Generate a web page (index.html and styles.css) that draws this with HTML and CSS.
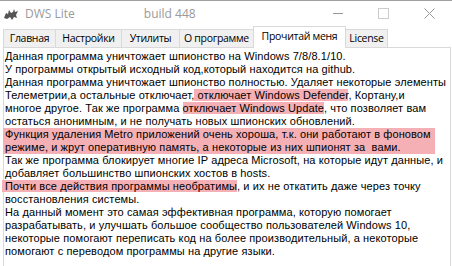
FILE: index.html
```html
<!DOCTYPE html>
<html lang="ru">
<head>
  <meta charset="UTF-8">
  <title>DWS Lite</title>
  <link rel="stylesheet" href="styles.css">
</head>
<body>
  <div class="window">
    <div class="titlebar">
      <svg class="app-icon" width="14" height="11" viewBox="0 0 14 11">
        <path d="M0 9 L2 4 L4 5 L5 1 L7 4 L9 3 L10 0 L11 3 L14 2 L12 6 L13 9 L10 8 L8 11 L6 8 L3 10 Z" fill="#555"/>
      </svg>
      <span class="title">DWS Lite</span>
      <span class="build">build 448</span>
      <div class="controls">
        <span class="ctl min"></span>
        <span class="ctl max"></span>
        <svg class="ctl close" width="11" height="11" viewBox="0 0 11 11">
          <path d="M0.5 0.5 L10.5 10.5 M10.5 0.5 L0.5 10.5" stroke="#999" stroke-width="1"/>
        </svg>
      </div>
    </div>

    <div class="tabs">
      <div class="tab tab-main">Главная</div>
      <div class="tab tab-settings">Настройки</div>
      <div class="tab tab-utils">Утилиты</div>
      <div class="tab tab-about">О программе</div>
      <div class="tab tab-readme active">Прочитай меня</div>
      <div class="tab tab-license">License</div>
    </div>

    <div class="panel">
      <div class="readme">
        <div class="line">Данная программа уничтожает шпионство на Windows 7/8/8.1/10.</div>
        <div class="line">У программы открытый исходный код,который находится на github.</div>
        <div class="line">Данная программа уничтожает шпионство полностью. Удаляет некоторые элементы</div>
        <div class="line">Телеметрии,а остальные отключает,<span class="mark"> отключает Windows Defender</span>, Кортану,и</div>
        <div class="line">многое другое. Так же программа <span class="mark">отключает Windows Update</span>, что позволяет вам</div>
        <div class="line">остаться анонимным, и не получать новых шпионских обновлений.</div>
        <div class="block-mark">
          <div class="line">Функция удаления Metro приложений очень хороша, т.к. они работают в фоновом</div>
          <div class="line">режиме, и жрут оперативную память, а некоторые из них шпионят за&nbsp; вами.</div>
        </div>
        <div class="line">Так же программа блокирует многие IP адреса Microsoft, на которые идут данные, и</div>
        <div class="line">добавляет большинство шпионских хостов в hosts.</div>
        <div class="line"><span class="mark first">Почти все действия программы необратимы</span>, и их не откатить даже через точку</div>
        <div class="line">восстановления системы.</div>
        <div class="line">На данный момент это самая эффективная программа, которую помогает</div>
        <div class="line">разрабатывать, и улучшать большое сообщество пользователей Windows 10,</div>
        <div class="line">некоторые помогают переписать код на более производительный, а некоторые</div>
        <div class="line">помогают с переводом программы на другие языки.</div>
      </div>
    </div>
  </div>
</body>
</html>
```

FILE: styles.css
```css
body {
  margin: 0;
  background: #fff;
  overflow: hidden;
}
.window {
  width: 452px;
  height: 266px;
  border-top: 1px solid #a0a0a0;
  box-sizing: border-box;
  background: #fff;
  font-family: "Liberation Sans", Arial, sans-serif;
  overflow: hidden;
}
.titlebar {
  height: 25px;
  display: flex;
  align-items: center;
}
.app-icon {
  margin-left: 4px;
  margin-top: 1px;
}
.title {
  margin-left: 7px;
  font-family: "Open Sans", "Noto Sans", sans-serif;
  font-size: 12px;
  color: #9a9a9a;
}
.build {
  margin-left: 69px;
  font-family: "Open Sans", "Noto Sans", sans-serif;
  font-size: 12px;
  color: #9a9a9a;
}
.controls {
  margin-left: auto;
  display: flex;
  align-items: center;
  margin-right: 17px;
}
.ctl {
  display: block;
}
.min {
  width: 10px;
  border-top: 1px solid #999;
  margin-right: 35px;
}
.max {
  width: 9px;
  height: 9px;
  border: 1px solid #ccc;
  margin-right: 35px;
}
.tabs {
  display: flex;
  align-items: flex-end;
  height: 21px;
  padding-left: 3px;
  font-family: "Open Sans", "Noto Sans", sans-serif;
  font-size: 10.5px;
  letter-spacing: -0.3px;
  color: #000;
}
.tab {
  box-sizing: border-box;
  height: 18px;
  line-height: 16px;
  text-align: center;
  white-space: nowrap;
  background: #f0f0f0;
  border: 1px solid #d9d9d9;
  border-bottom: none;
  margin-left: -1px;
}
.tab:first-child {
  margin-left: 0;
}
.tab-main { width: 53px; }
.tab-settings { width: 67px; }
.tab-utils { width: 59px; }
.tab-about { width: 75px; }
.tab-readme { width: 93px; }
.tab-license { width: 43px; }
.tab.active {
  height: 22px;
  line-height: 18px;
  background: #fff;
  position: relative;
  z-index: 1;
  margin-bottom: -1px;
}
.panel {
  margin-left: 3px;
  margin-right: 1px;
  height: 230px;
  border: 1px solid #d9d9d9;
  background: #fff;
}
.readme {
  padding: 2px 0 0 1px;
  font-size: 11px;
  line-height: 13px;
  letter-spacing: 0.1px;
  color: #000;
}
.line {
  white-space: nowrap;
  height: 13px;
}
.mark {
  background: #f4b0b5;
}
.mark.first {
  margin-left: -3px;
  padding-left: 3px;
}
.block-mark {
  background: #f4b0b5;
  width: 430px;
  margin-left: -2px;
  padding-left: 2px;
}
```
